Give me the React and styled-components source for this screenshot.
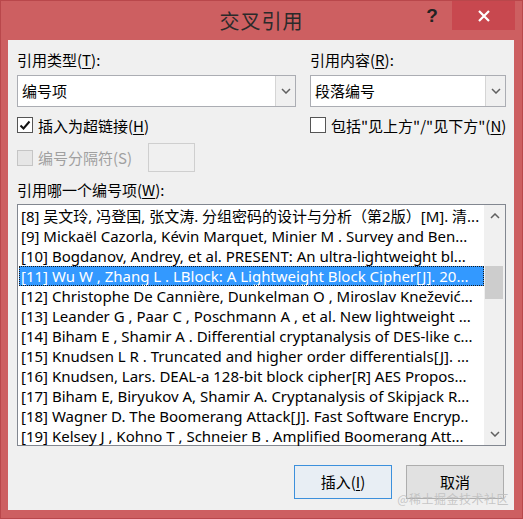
import React from 'react';
import styled, { createGlobalStyle } from 'styled-components';

const GlobalStyle = createGlobalStyle`
  html, body {
    margin: 0;
    padding: 0;
    background: #cd5f61;
  }
`;

const colors = {
  frame: '#cd5f61',
  frameEdge: '#b9474b',
  close: '#c8484f',
  face: '#f0f0f0',
  field: '#abadb3',
  select: '#3399ff',
};

const cjk = `"Noto Sans CJK SC", "Noto Sans", sans-serif`;
const latin = `"Noto Sans", "Noto Sans CJK SC", sans-serif`;

const Window = styled.div`
  position: relative;
  width: 523px;
  height: 519px;
  box-sizing: border-box;
  background: ${colors.frame};
  border: 1px solid ${colors.frameEdge};
  display: flex;
  flex-direction: column;
  font-family: ${cjk};
  color: #000;
`;

const TitleBar = styled.div`
  height: 39px;
  display: grid;
  grid-template-columns: 1fr auto 1fr;
  align-items: start;
`;

const Title = styled.h1`
  grid-column: 2;
  margin: 0;
  font-size: 20px;
  font-weight: 400;
  line-height: 39px;
  color: #2a2a2a;
  letter-spacing: 1px;
`;

const Controls = styled.div`
  grid-column: 3;
  justify-self: end;
  display: flex;
  margin-right: 7px;
`;

const HelpButton = styled.div`
  width: 30px;
  height: 29px;
  margin-right: 5px;
  font-family: "Liberation Sans", sans-serif;
  font-weight: 700;
  font-size: 19px;
  line-height: 30px;
  text-align: center;
  color: #222;
`;

const CloseButton = styled.div`
  width: 63px;
  height: 29px;
  background: ${colors.close};
  display: flex;
  align-items: center;
  justify-content: center;
`;

const Content = styled.div`
  flex: 1;
  margin: 0 8px 8px 7px;
  padding: 11px 8px 11px 9px;
  background: ${colors.face};
  display: flex;
  flex-direction: column;
`;

const TopGrid = styled.div`
  display: grid;
  grid-template-columns: 279px 196px;
  column-gap: 14px;
`;

const Column = styled.div`
  display: flex;
  flex-direction: column;
`;

const Label = styled.div`
  font-size: 15px;
  line-height: 18px;
  height: 18px;
  margin-top: ${(p) => p.$top ?? 0}px;
  margin-bottom: ${(p) => p.$bottom ?? 6}px;
  white-space: nowrap;
  color: #000;

  u {
    text-decoration-thickness: 1px;
    text-underline-offset: 2px;
  }
`;

const Select = styled.div`
  height: 32px;
  box-sizing: border-box;
  border: 1px solid ${colors.field};
  background: #fff;
  display: flex;
  margin-bottom: 10px;
`;

const SelectValue = styled.div`
  flex: 1;
  padding-left: 4px;
  font-size: 15px;
  line-height: 30px;
`;

const SelectArrow = styled.div`
  width: 19px;
  border-left: 1px solid #d5d5d5;
  background: #f0f0f0;
  display: flex;
  align-items: center;
  justify-content: center;
`;

const CheckRow = styled.label`
  display: flex;
  align-items: center;
  height: ${(p) => p.$height ?? 16}px;
  margin-top: ${(p) => p.$top ?? 0}px;
  font-size: 15px;
  color: ${(p) => (p.$disabled ? '#a0a0a0' : '#000')};
  white-space: nowrap;

  u {
    text-decoration-thickness: 1px;
    text-underline-offset: 2px;
  }
`;

const Box = styled.span`
  width: 16px;
  height: 16px;
  box-sizing: border-box;
  border: 1px solid ${(p) => (p.$disabled ? '#c5c5c5' : '#555')};
  background: ${(p) => (p.$disabled ? '#e6e6e6' : '#fff')};
  margin-right: 5px;
  display: flex;
  align-items: center;
  justify-content: center;
  flex: none;
`;

const SeparatorInput = styled.div`
  width: 47px;
  height: 29px;
  box-sizing: border-box;
  border: 1px solid #cfcfcf;
  background: #f0f0f0;
  margin-left: 16px;
`;

const ListBox = styled.div`
  margin-top: 5px;
  height: 242px;
  box-sizing: border-box;
  border: 1px solid #828790;
  background: #fff;
  display: flex;
`;

const Rows = styled.div`
  flex: 1;
  padding: 1px 0 0 1px;
  min-width: 0;
`;

const Row = styled.div`
  height: 20px;
  box-sizing: border-box;
  padding: 1px 0 0 2px;
  font-family: ${latin};
  font-size: 15px;
  line-height: 19px;
  white-space: nowrap;
  overflow: hidden;
  text-overflow: ellipsis;
  color: ${(p) => (p.$selected ? '#fff' : '#000')};
  background: ${(p) => (p.$selected ? colors.select : 'transparent')};
  outline: ${(p) => (p.$selected ? '1px dotted #1a1a1a' : 'none')};
  outline-offset: -1px;
`;

const ScrollBar = styled.div`
  width: 21px;
  background: #f0f0f0;
  display: flex;
  flex-direction: column;
`;

const ScrollButton = styled.div`
  height: 22px;
  display: flex;
  align-items: center;
  justify-content: center;
`;

const Track = styled.div`
  flex: 1;
  padding: 0 2px 0 1px;
`;

const Thumb = styled.div`
  height: 33px;
  background: #cdcdcd;
`;

const ButtonRow = styled.div`
  margin-top: 19px;
  display: flex;
  justify-content: flex-end;
  gap: 14px;
  padding-right: 2px;
`;

const Button = styled.div`
  width: 98px;
  height: 34px;
  box-sizing: border-box;
  border: 1px solid ${(p) => (p.$primary ? '#3c90dc' : '#adadad')};
  background: ${(p) => (p.$primary ? '#e8eef4' : '#e1e1e1')};
  font-size: 15px;
  line-height: 32px;
  text-align: center;

  u {
    text-decoration-thickness: 1px;
    text-underline-offset: 2px;
  }
`;

const Watermark = styled.div`
  position: absolute;
  right: 13px;
  bottom: 12px;
  font-size: 12px;
  line-height: 14px;
  color: rgba(190, 190, 190, 0.85);
  letter-spacing: 0.5px;
  pointer-events: none;
`;

const Chevron = ({ up }) => (
  <svg width="10" height="6" viewBox="0 0 10 6">
    <polyline
      points={up ? '1,5 5,1 9,5' : '1,1 5,5 9,1'}
      fill="none"
      stroke="#606060"
      strokeWidth="1.5"
    />
  </svg>
);

const Check = () => (
  <svg width="12" height="11" viewBox="0 0 12 11">
    <polyline points="1.5,5.5 4.5,8.5 10.5,1.5" fill="none" stroke="#111" strokeWidth="2" />
  </svg>
);

const entries = [
  '[8] 吴文玲, 冯登国, 张文涛. 分组密码的设计与分析（第2版）[M]. 清...',
  '[9] Mickaël Cazorla, Kévin Marquet, Minier M . Survey and Ben...',
  '[10] Bogdanov, Andrey, et al. PRESENT: An ultra-lightweight bl...',
  '[11] Wu W , Zhang L . LBlock: A Lightweight Block Cipher[J]. 20...',
  '[12] Christophe De Cannière, Dunkelman O , Miroslav Knežević...',
  '[13] Leander G , Paar C , Poschmann A , et al. New lightweight ...',
  '[14] Biham E , Shamir A . Differential cryptanalysis of DES-like c...',
  '[15] Knudsen L R . Truncated and higher order differentials[J]. ...',
  '[16] Knudsen, Lars. DEAL-a 128-bit block cipher[R] AES Propos...',
  '[17] Biham E, Biryukov A, Shamir A. Cryptanalysis of Skipjack R...',
  '[18] Wagner D. The Boomerang Attack[J]. Fast Software Encryp..',
  '[19] Kelsey J , Kohno T , Schneier B . Amplified Boomerang Att...',
];

const selectedIndex = 3;

export default function App() {
  return (
    <>
      <GlobalStyle />
      <Window>
        <TitleBar>
          <Title>交叉引用</Title>
          <Controls>
            <HelpButton>?</HelpButton>
            <CloseButton>
              <svg width="12" height="12" viewBox="0 0 12 12">
                <path d="M1 1 L11 11 M11 1 L1 11" stroke="#fff" strokeWidth="2.2" />
              </svg>
            </CloseButton>
          </Controls>
        </TitleBar>

        <Content>
          <TopGrid>
            <Column>
              <Label>
                引用类型(<u>T</u>):
              </Label>
              <Select>
                <SelectValue>编号项</SelectValue>
                <SelectArrow>
                  <Chevron />
                </SelectArrow>
              </Select>
              <CheckRow>
                <Box>
                  <Check />
                </Box>
                插入为超链接(<u>H</u>)
              </CheckRow>
              <CheckRow $disabled $top={10} $height={29}>
                <Box $disabled />
                编号分隔符(S)
                <SeparatorInput />
              </CheckRow>
            </Column>
            <Column>
              <Label>
                引用内容(<u>R</u>):
              </Label>
              <Select>
                <SelectValue>段落编号</SelectValue>
                <SelectArrow>
                  <Chevron />
                </SelectArrow>
              </Select>
              <CheckRow>
                <Box />
                包括"见上方"/"见下方"(<u>N</u>)
              </CheckRow>
            </Column>
          </TopGrid>

          <Label $top={9} $bottom={0}>
            引用哪一个编号项(<u>W</u>):
          </Label>

          <ListBox>
            <Rows>
              {entries.map((text, i) => (
                <Row key={text} $selected={i === selectedIndex}>
                  {text}
                </Row>
              ))}
            </Rows>
            <ScrollBar>
              <ScrollButton>
                <Chevron up />
              </ScrollButton>
              <Track>
                <Thumb style={{ marginTop: 39 }} />
              </Track>
              <ScrollButton>
                <Chevron />
              </ScrollButton>
            </ScrollBar>
          </ListBox>

          <ButtonRow>
            <Button $primary>
              插入(<u>I</u>)
            </Button>
            <Button>取消</Button>
          </ButtonRow>
        </Content>
        <Watermark>@稀土掘金技术社区</Watermark>
      </Window>
    </>
  );
}
